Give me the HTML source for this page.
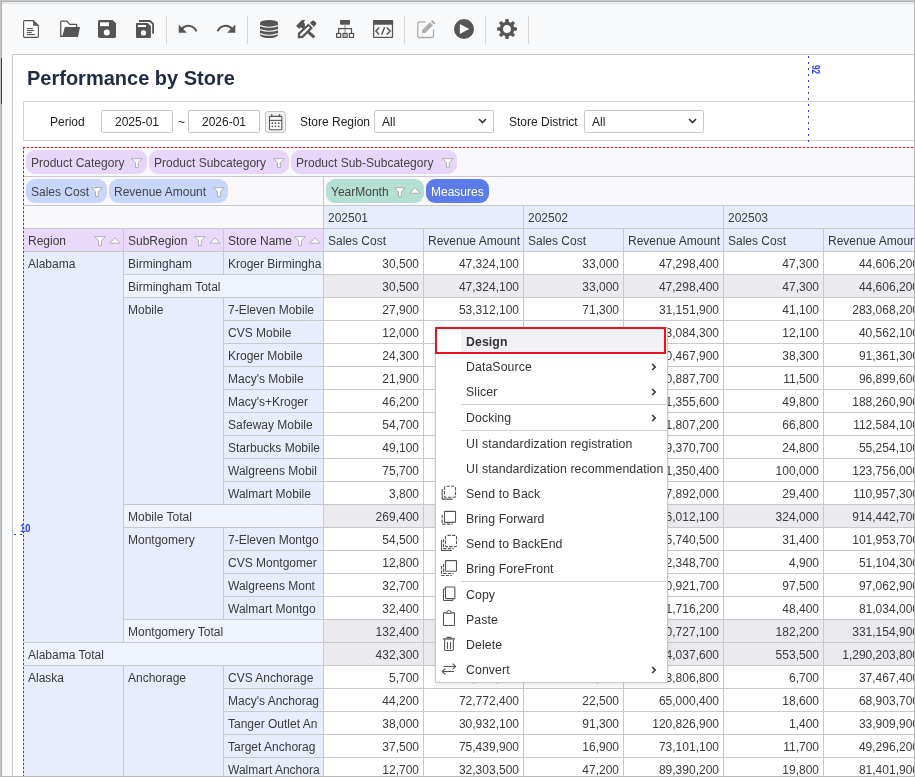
<!DOCTYPE html>
<html><head><meta charset="utf-8">
<style>
*{box-sizing:border-box;margin:0;padding:0}
html,body{width:915px;height:777px;overflow:hidden;background:#f8f9fb;font-family:"Liberation Sans",sans-serif;font-size:12px;color:#333}
.abs{position:absolute}
#frame{position:absolute;left:0;top:0;width:915px;height:777px;border-top:1px solid #c5c5c5;border-left:1px solid #c3c3c3;border-right:1px solid #b8b8b8;border-bottom:1px solid #b8b8b8;pointer-events:none;z-index:50}
#frame2{position:absolute;left:1px;top:1px;width:913px;height:775px;border-top:1px solid #b0b0b0;border-left:1px solid #b2b2b2;pointer-events:none;z-index:50}
.tb{position:absolute;top:16px;width:1px;height:28px;background:#d6d6d6}
.ico{position:absolute}
#panel{position:absolute;left:12px;top:54px;width:910px;height:730px;background:#fff;border:1px solid #c9c9c9}
#title{position:absolute;left:27px;top:64px;font-size:20px;font-weight:bold;color:#1f2b44;white-space:nowrap;line-height:28px}
#filter{position:absolute;left:23px;top:101px;width:900px;height:40px;border:1px solid #d2d2d2;background:#fff}
.lbl{position:absolute;top:114px;font-size:12px;color:#222;line-height:16px;white-space:nowrap}
.inp{position:absolute;top:110px;height:23px;border:1px solid #c8c8c8;border-radius:2px;background:#fff;font-size:12px;color:#222;line-height:23px;white-space:nowrap}
#pivot{position:absolute;left:23px;top:147px;width:900px;height:640px;background:#f8f8fa}
#dtop{position:absolute;left:23px;top:147px;width:892px;height:1px;background:repeating-linear-gradient(90deg,#ff0000 0,#ff0000 2px,#cfcfcf 2px,#cfcfcf 4px);z-index:10}
#dleft{position:absolute;left:23px;top:147px;width:1px;height:630px;background:repeating-linear-gradient(180deg,#ff0000 0,#ff0000 2px,#cfcfcf 2px,#cfcfcf 4px);z-index:10}
.chip{position:absolute;height:24px;border-radius:9px;font-size:12px;color:#444;line-height:26px;white-space:nowrap;padding-left:5px}
.hl{position:absolute;background:#c9c9cc}
.c{position:absolute;overflow:hidden;white-space:nowrap;line-height:22px;padding-left:4px;padding-top:1px;color:#3a3a3a}
.dim{background:#e7edfc}
.tot{background:#eff3fd}
.num{background:#fff;text-align:right;padding-right:4px;padding-left:0}
.tnum{background:#ebeaee}
.hdr{background:#e7edfc}
.phdr{background:#ead9fa}
#menu{position:absolute;left:435px;top:327px;width:233px;height:356px;background:#fff;border:1px solid #c9c9c9;box-shadow:0 2px 5px rgba(0,0,0,0.1);z-index:20}
.mi{position:absolute;left:30px;height:25px;line-height:27px;font-size:12.3px;letter-spacing:0.1px;color:#333;white-space:nowrap}
.sep{position:absolute;left:25px;width:206px;height:1px;background:#d0d0d0}
</style></head><body><div id="root" style="position:absolute;left:0;top:0;width:915px;height:777px;will-change:transform;overflow:hidden">

<div id="frame"></div><div id="frame2"></div>
<!-- toolbar icons -->
<svg class="ico" style="left:23px;top:20px" width="16" height="18" viewBox="0 0 16 18"><path d="M0.6,1.6 Q0.6,0.6 1.6,0.6 H10.4 L15.4,5.6 V16.4 Q15.4,17.4 14.4,17.4 H1.6 Q0.6,17.4 0.6,16.4 Z" fill="#fff" stroke="#555" stroke-width="1.1"/><path d="M10.2,0.6 L15.4,5.8 H10.2 Z" fill="#555"/><rect x="4" y="8" width="5.8" height="1.1" fill="#555"/><rect x="4" y="10" width="6.8" height="1.1" fill="#555"/><rect x="4" y="12" width="4.8" height="1.1" fill="#555"/><rect x="4" y="14" width="7.8" height="1.1" fill="#555"/></svg>
<svg class="ico" style="left:60px;top:20px" width="21" height="18" viewBox="0 0 21 18"><path d="M0.75,16.4 V1.8 Q0.75,1.05 1.5,1.05 H6.9 L9.7,4.4 H16 Q16.7,4.4 16.7,5.1 V7.6 H5.3 L3,16.4 Z" fill="#fff" stroke="#555" stroke-width="1.25" stroke-linejoin="round"/><path d="M5.4,7 H20 L18,17 H0.2 V15.8 H3 Z" fill="#555"/></svg>
<svg class="ico" style="left:98px;top:20px" width="18" height="18" viewBox="0 0 18 18"><path d="M1.5,0 H14.5 L18,3.2 V16.3 Q18,18 16.3,18 H1.7 Q0,18 0,16.3 V1.5 Q0,0 1.5,0 Z" fill="#555"/><rect x="2" y="2.3" width="9" height="3.8" fill="#fff"/><circle cx="8.8" cy="12.6" r="3" fill="#fff"/></svg>
<svg class="ico" style="left:135px;top:19px" width="20" height="20" viewBox="0 0 20 20"><path d="M4,1.1 H15.4 L19,4.5 V14.8 H17.2 V5.3 L14.7,2.9 H4 Z" fill="#555"/><path d="M1.6,3.9 H12.7 L15.9,7 V18 Q15.9,18.9 15,18.9 H1.9 Q1,18.9 1,18 V4.5 Q1,3.9 1.6,3.9 Z" fill="#555"/><rect x="2.9" y="6" width="8.1" height="2" fill="#fff"/><circle cx="8.5" cy="13.9" r="2.6" fill="#fff"/></svg>
<div class="tb" style="left:166px"></div>
<svg class="ico" style="left:178px;top:24px" width="20" height="10" viewBox="0 0 20 10"><path d="M0.7,0.6 V8.8 H8.9 Z" fill="#555"/><path d="M3.8,5.2 A8.4,8.4 0 0 1 18.4,7.4" fill="none" stroke="#555" stroke-width="2"/></svg>
<svg class="ico" style="left:216px;top:24px" width="20" height="10" viewBox="0 0 20 10"><path d="M19.3,0.6 V8.8 H11.1 Z" fill="#555"/><path d="M16.2,5.2 A8.4,8.4 0 0 0 1.6,7.4" fill="none" stroke="#555" stroke-width="2"/></svg>
<div class="tb" style="left:247px"></div>
<svg class="ico" style="left:260px;top:20px" width="18" height="18" viewBox="0 0 18 18"><path d="M0,2.9 A9,2.9 0 0 1 18,2.9 V15.1 A9,2.9 0 0 1 0,15.1 Z" fill="#555"/><path d="M0,5.6 Q9,8.8 18,5.6 M0,9.6 Q9,12.8 18,9.6 M0,13.6 Q9,16.8 18,13.6" fill="none" stroke="#f8f9fb" stroke-width="1.1"/></svg>
<svg class="ico" style="left:293px;top:17px" width="26" height="24" viewBox="0 0 26 24"><path d="M3,9 L8.3,3.6 Q9,3 10,3 L12.2,3 L10.8,5.3 L12,7 L11.7,9.7 L9.7,11.5 L7.7,10.2 L6.5,11.9 Z" fill="#555"/><path d="M10,10 L21.3,20.3" stroke="#555" stroke-width="3"/><path d="M4.8,21.2 L5,16 L15.4,6.5 L19.9,11 L10,21 Z" fill="#555"/><path d="M7,19 L7.2,17 L15.5,9.3 L16.9,10.7 L9,18.8 Z" fill="#fff"/><path d="M16.8,5.8 L19.7,3.6 Q20.6,3.2 21.4,3.9 L23.1,5.6 Q23.6,6.4 23,7.3 L20.9,10 Z" fill="#555"/></svg>
<svg class="ico" style="left:335px;top:20px" width="20" height="18" viewBox="0 0 20 18"><rect x="5" y="0" width="10" height="4.8" rx="0.8" fill="#555"/><rect x="9.3" y="4.8" width="1.5" height="12" fill="#aaa"/><path d="M3.6,13.3 V8.7 H16.5 V13.3" fill="none" stroke="#555" stroke-width="1.2"/><rect x="1.6" y="13.5" width="4.1" height="3.9" fill="#fff" stroke="#555" stroke-width="1.2"/><rect x="8" y="13.5" width="4.1" height="3.9" fill="none" stroke="#555" stroke-width="1.2"/><rect x="14.4" y="13.5" width="4.1" height="3.9" fill="#fff" stroke="#555" stroke-width="1.2"/></svg>
<svg class="ico" style="left:373px;top:20px" width="21" height="18" viewBox="0 0 21 18"><rect x="0.65" y="0.65" width="18.8" height="16.8" rx="0.8" fill="#fff" stroke="#555" stroke-width="1.3"/><rect x="0" y="0" width="20.1" height="4.7" rx="0.8" fill="#555"/><path d="M6.2,7.4 L2.9,11 L6.2,14.6 M13.9,7.4 L17.2,11 L13.9,14.6 M11.6,7.2 L8.7,14.8" fill="none" stroke="#555" stroke-width="1.5"/></svg>
<div class="tb" style="left:404px"></div>
<svg class="ico" style="left:416px;top:19px" width="21" height="20" viewBox="0 0 21 20"><path d="M9.5,2.8 H3.2 Q1.8,2.8 1.8,4.2 V17.1 Q1.8,18.5 3.2,18.5 H16.1 Q17.5,18.5 17.5,17.1 V10.6" fill="none" stroke="#acacac" stroke-width="1.3"/><path d="M16.4,0.9 L19.4,3.9 L17.9,5.4 L14.9,2.4 Z M14,3.3 L17,6.3 L9.2,14.1 L6.2,14.1 L6.2,11.1 Z" fill="#acacac"/></svg>
<svg class="ico" style="left:454px;top:19px" width="20" height="20" viewBox="0 0 20 20"><circle cx="10" cy="10" r="10" fill="#555"/><path d="M5.8,4.9 V14.9 L15.2,9.9 Z" fill="#fff"/></svg>
<div class="tb" style="left:485px"></div>
<svg class="ico" style="left:497px;top:19px" width="20" height="20" viewBox="-10 -10 20 20"><g fill="#555"><circle r="7.3"/><rect x="-1.75" y="-9.9" width="3.5" height="5" rx="0.9" transform="rotate(0)"/><rect x="-1.75" y="-9.9" width="3.5" height="5" rx="0.9" transform="rotate(45)"/><rect x="-1.75" y="-9.9" width="3.5" height="5" rx="0.9" transform="rotate(90)"/><rect x="-1.75" y="-9.9" width="3.5" height="5" rx="0.9" transform="rotate(135)"/><rect x="-1.75" y="-9.9" width="3.5" height="5" rx="0.9" transform="rotate(180)"/><rect x="-1.75" y="-9.9" width="3.5" height="5" rx="0.9" transform="rotate(225)"/><rect x="-1.75" y="-9.9" width="3.5" height="5" rx="0.9" transform="rotate(270)"/><rect x="-1.75" y="-9.9" width="3.5" height="5" rx="0.9" transform="rotate(315)"/></g><circle r="3.9" fill="#fff"/></svg>
<div class="tb" style="left:528px"></div>

<div id="panel"></div>
<div class="abs" style="left:2px;top:2px;width:912px;height:1px;background:#e9eef8"></div>
<div class="abs" style="left:2px;top:3px;width:912px;height:1px;background:#e3e5e1"></div>
<div class="abs" style="left:1px;top:58px;width:1px;height:46px;background:#3c4152;z-index:60"></div>
<div id="title">Performance by Store</div>
<div id="filter"></div>
<div class="lbl" style="left:50px">Period</div>
<div class="inp" style="left:101px;width:72px;text-align:center">2025-01</div>
<div class="lbl" style="left:178px">~</div>
<div class="inp" style="left:188px;width:72px;text-align:center">2026-01</div>
<div class="abs" style="left:265px;top:111px;width:21px;height:22px;border:1px solid #c4c4c4;border-radius:3px;background:#f1f1f2"></div><svg class="ico" style="left:265px;top:111px" width="22" height="22" viewBox="0 0 22 22"><rect x="4.5" y="5.4" width="12.3" height="13.3" rx="0.6" fill="#fafafa" stroke="#555" stroke-width="1.1"/><path d="M4.5,9.4 H16.8" stroke="#555" stroke-width="1.1"/><rect x="6.1" y="3.2" width="1.3" height="3" fill="#555"/><rect x="13.9" y="3.2" width="1.3" height="3" fill="#555"/><circle cx="7.3" cy="12.2" r="0.85" fill="#555"/><circle cx="10.5" cy="12.2" r="0.85" fill="#555"/><circle cx="13.7" cy="12.2" r="0.85" fill="#555"/><circle cx="7.3" cy="15.3" r="0.85" fill="#555"/><circle cx="10.5" cy="15.3" r="0.85" fill="#555"/><circle cx="13.7" cy="15.3" r="0.85" fill="#555"/></svg>
<div class="lbl" style="left:300px">Store Region</div>
<div class="inp" style="left:374px;width:120px;padding-left:7px">All</div>
<svg class="ico" style="left:478px;top:118px" width="9" height="6" viewBox="0 0 9 6"><path d="M1,1 L4.5,4.5 L8,1" fill="none" stroke="#333" stroke-width="1.6"/></svg>
<div class="lbl" style="left:509px">Store District</div>
<div class="inp" style="left:584px;width:120px;padding-left:7px">All</div>
<svg class="ico" style="left:688px;top:118px" width="9" height="6" viewBox="0 0 9 6"><path d="M1,1 L4.5,4.5 L8,1" fill="none" stroke="#333" stroke-width="1.6"/></svg>
<!-- guide line -->
<div class="abs" style="left:808px;top:56px;width:1px;height:88px;background:repeating-linear-gradient(180deg,#2a3cf5 0,#2a3cf5 2px,transparent 2px,transparent 6px)"></div>
<div class="abs" style="left:819.5px;top:65px;font-size:10px;font-weight:bold;letter-spacing:0;color:#3040f5;transform:rotate(90deg) scaleX(0.82);transform-origin:left top;line-height:10px;white-space:nowrap">92</div>
<!-- pivot -->
<div id="pivot"></div><div id="dtop"></div><div id="dleft"></div>
<div class="hl" style="left:24px;top:176px;width:890px;height:1px"></div>
<div class="hl" style="left:323px;top:177px;width:1px;height:28px"></div>
<div class="hl" style="left:24px;top:205px;width:890px;height:572px"></div>

<div class="chip" style="left:26px;top:150px;width:121px;background:#e8d6fa;color:#444">Product Category</div>
<svg class="ico" style="left:131px;top:158px" width="12" height="11" viewBox="0 0 12 11"><path d="M0.6,0.7 H11.2 L7.3,4.7 V9.6 H4.5 V4.7 Z" fill="#fff" stroke="#a8a8a8" stroke-width="0.9" stroke-linejoin="round"/></svg>
<div class="chip" style="left:149px;top:150px;width:140px;background:#e8d6fa;color:#444">Product Subcategory</div>
<svg class="ico" style="left:273px;top:158px" width="12" height="11" viewBox="0 0 12 11"><path d="M0.6,0.7 H11.2 L7.3,4.7 V9.6 H4.5 V4.7 Z" fill="#fff" stroke="#a8a8a8" stroke-width="0.9" stroke-linejoin="round"/></svg>
<div class="chip" style="left:291px;top:150px;width:166px;background:#e8d6fa;color:#444">Product Sub-Subcategory</div>
<svg class="ico" style="left:442px;top:158px" width="12" height="11" viewBox="0 0 12 11"><path d="M0.6,0.7 H11.2 L7.3,4.7 V9.6 H4.5 V4.7 Z" fill="#fff" stroke="#a8a8a8" stroke-width="0.9" stroke-linejoin="round"/></svg>
<div class="chip" style="left:26px;top:179px;width:81px;background:#c9d6fb;color:#444">Sales Cost</div>
<svg class="ico" style="left:91px;top:187px" width="12" height="11" viewBox="0 0 12 11"><path d="M0.6,0.7 H11.2 L7.3,4.7 V9.6 H4.5 V4.7 Z" fill="#fff" stroke="#a8a8a8" stroke-width="0.9" stroke-linejoin="round"/></svg>
<div class="chip" style="left:109px;top:179px;width:119px;background:#c9d6fb;color:#444">Revenue Amount</div>
<svg class="ico" style="left:213px;top:187px" width="12" height="11" viewBox="0 0 12 11"><path d="M0.6,0.7 H11.2 L7.3,4.7 V9.6 H4.5 V4.7 Z" fill="#fff" stroke="#a8a8a8" stroke-width="0.9" stroke-linejoin="round"/></svg>
<div class="chip" style="left:326px;top:179px;width:98px;background:#b3e0d3;color:#444">YearMonth</div>
<svg class="ico" style="left:394px;top:187px" width="12" height="11" viewBox="0 0 12 11"><path d="M0.6,0.7 H11.2 L7.3,4.7 V9.6 H4.5 V4.7 Z" fill="#fff" stroke="#a8a8a8" stroke-width="0.9" stroke-linejoin="round"/></svg>
<svg class="ico" style="left:409px;top:187px" width="12" height="7" viewBox="0 0 12 7"><path d="M0.8,6.2 H11.2 L6,0.8 Z" fill="#fff" stroke="#aaa" stroke-width="0.9" stroke-linejoin="round"/></svg>
<div class="chip" style="left:426px;top:179px;width:63px;background:#5b7bea;color:#fff">Measures</div>
<div class="c " style="left:24px;top:206px;width:299px;height:22px;background:#f9f9fb"></div>
<div class="c hdr" style="left:324px;top:206px;width:199px;height:22px;">202501</div>
<div class="c hdr" style="left:524px;top:206px;width:199px;height:22px;">202502</div>
<div class="c hdr" style="left:724px;top:206px;width:199px;height:22px;">202503</div>
<div class="c phdr" style="left:24px;top:229px;width:99px;height:22px;">Region</div>
<svg class="ico" style="left:94px;top:236px" width="12" height="11" viewBox="0 0 12 11"><path d="M0.6,0.7 H11.2 L7.3,4.7 V9.6 H4.5 V4.7 Z" fill="#fff" stroke="#a8a8a8" stroke-width="0.9" stroke-linejoin="round"/></svg>
<svg class="ico" style="left:108.5px;top:236.5px" width="12" height="7" viewBox="0 0 12 7"><path d="M0.8,6.2 H11.2 L6,0.8 Z" fill="#fff" stroke="#aaa" stroke-width="0.9" stroke-linejoin="round"/></svg>
<div class="c phdr" style="left:124px;top:229px;width:99px;height:22px;">SubRegion</div>
<svg class="ico" style="left:194px;top:236px" width="12" height="11" viewBox="0 0 12 11"><path d="M0.6,0.7 H11.2 L7.3,4.7 V9.6 H4.5 V4.7 Z" fill="#fff" stroke="#a8a8a8" stroke-width="0.9" stroke-linejoin="round"/></svg>
<svg class="ico" style="left:208.5px;top:236.5px" width="12" height="7" viewBox="0 0 12 7"><path d="M0.8,6.2 H11.2 L6,0.8 Z" fill="#fff" stroke="#aaa" stroke-width="0.9" stroke-linejoin="round"/></svg>
<div class="c phdr" style="left:224px;top:229px;width:99px;height:22px;">Store Name</div>
<svg class="ico" style="left:294px;top:236px" width="12" height="11" viewBox="0 0 12 11"><path d="M0.6,0.7 H11.2 L7.3,4.7 V9.6 H4.5 V4.7 Z" fill="#fff" stroke="#a8a8a8" stroke-width="0.9" stroke-linejoin="round"/></svg>
<svg class="ico" style="left:308.5px;top:236.5px" width="12" height="7" viewBox="0 0 12 7"><path d="M0.8,6.2 H11.2 L6,0.8 Z" fill="#fff" stroke="#aaa" stroke-width="0.9" stroke-linejoin="round"/></svg>
<div class="c hdr" style="left:324px;top:229px;width:99px;height:22px;">Sales Cost</div>
<div class="c hdr" style="left:424px;top:229px;width:99px;height:22px;">Revenue Amount</div>
<div class="c hdr" style="left:524px;top:229px;width:99px;height:22px;">Sales Cost</div>
<div class="c hdr" style="left:624px;top:229px;width:99px;height:22px;">Revenue Amount</div>
<div class="c hdr" style="left:724px;top:229px;width:99px;height:22px;">Sales Cost</div>
<div class="c hdr" style="left:824px;top:229px;width:99px;height:22px;">Revenue Amount</div>
<div class="c dim" style="left:24px;top:252px;width:99px;height:390px;">Alabama</div>
<div class="c dim" style="left:24px;top:666px;width:99px;height:229px;">Alaska</div>
<div class="c dim" style="left:124px;top:252px;width:99px;height:22px;">Birmingham</div>
<div class="c dim" style="left:124px;top:298px;width:99px;height:206px;">Mobile</div>
<div class="c dim" style="left:124px;top:528px;width:99px;height:91px;">Montgomery</div>
<div class="c dim" style="left:124px;top:666px;width:99px;height:229px;">Anchorage</div>
<div class="c dim" style="left:224px;top:252px;width:99px;height:22px;">Kroger Birmingha</div>
<div class="c num" style="left:324px;top:252px;width:99px;height:22px;">30,500</div>
<div class="c num" style="left:424px;top:252px;width:99px;height:22px;">47,324,100</div>
<div class="c num" style="left:524px;top:252px;width:99px;height:22px;">33,000</div>
<div class="c num" style="left:624px;top:252px;width:99px;height:22px;">47,298,400</div>
<div class="c num" style="left:724px;top:252px;width:99px;height:22px;">47,300</div>
<div class="c num" style="left:824px;top:252px;width:99px;height:22px;">44,606,200</div>
<div class="c tot" style="left:124px;top:275px;width:199px;height:22px;">Birmingham Total</div>
<div class="c num tnum" style="left:324px;top:275px;width:99px;height:22px;">30,500</div>
<div class="c num tnum" style="left:424px;top:275px;width:99px;height:22px;">47,324,100</div>
<div class="c num tnum" style="left:524px;top:275px;width:99px;height:22px;">33,000</div>
<div class="c num tnum" style="left:624px;top:275px;width:99px;height:22px;">47,298,400</div>
<div class="c num tnum" style="left:724px;top:275px;width:99px;height:22px;">47,300</div>
<div class="c num tnum" style="left:824px;top:275px;width:99px;height:22px;">44,606,200</div>
<div class="c dim" style="left:224px;top:298px;width:99px;height:22px;">7-Eleven Mobile</div>
<div class="c num" style="left:324px;top:298px;width:99px;height:22px;">27,900</div>
<div class="c num" style="left:424px;top:298px;width:99px;height:22px;">53,312,100</div>
<div class="c num" style="left:524px;top:298px;width:99px;height:22px;">71,300</div>
<div class="c num" style="left:624px;top:298px;width:99px;height:22px;">31,151,900</div>
<div class="c num" style="left:724px;top:298px;width:99px;height:22px;">41,100</div>
<div class="c num" style="left:824px;top:298px;width:99px;height:22px;">283,068,200</div>
<div class="c dim" style="left:224px;top:321px;width:99px;height:22px;">CVS Mobile</div>
<div class="c num" style="left:324px;top:321px;width:99px;height:22px;">12,000</div>
<div class="c num" style="left:424px;top:321px;width:99px;height:22px;">63,084,300</div>
<div class="c num" style="left:524px;top:321px;width:99px;height:22px;">12,100</div>
<div class="c num" style="left:624px;top:321px;width:99px;height:22px;">63,084,300</div>
<div class="c num" style="left:724px;top:321px;width:99px;height:22px;">12,100</div>
<div class="c num" style="left:824px;top:321px;width:99px;height:22px;">40,562,100</div>
<div class="c dim" style="left:224px;top:344px;width:99px;height:22px;">Kroger Mobile</div>
<div class="c num" style="left:324px;top:344px;width:99px;height:22px;">24,300</div>
<div class="c num" style="left:424px;top:344px;width:99px;height:22px;">80,467,900</div>
<div class="c num" style="left:524px;top:344px;width:99px;height:22px;">38,300</div>
<div class="c num" style="left:624px;top:344px;width:99px;height:22px;">80,467,900</div>
<div class="c num" style="left:724px;top:344px;width:99px;height:22px;">38,300</div>
<div class="c num" style="left:824px;top:344px;width:99px;height:22px;">91,361,300</div>
<div class="c dim" style="left:224px;top:367px;width:99px;height:22px;">Macy's Mobile</div>
<div class="c num" style="left:324px;top:367px;width:99px;height:22px;">21,900</div>
<div class="c num" style="left:424px;top:367px;width:99px;height:22px;">60,887,700</div>
<div class="c num" style="left:524px;top:367px;width:99px;height:22px;">11,500</div>
<div class="c num" style="left:624px;top:367px;width:99px;height:22px;">60,887,700</div>
<div class="c num" style="left:724px;top:367px;width:99px;height:22px;">11,500</div>
<div class="c num" style="left:824px;top:367px;width:99px;height:22px;">96,899,600</div>
<div class="c dim" style="left:224px;top:390px;width:99px;height:22px;">Macy's+Kroger</div>
<div class="c num" style="left:324px;top:390px;width:99px;height:22px;">46,200</div>
<div class="c num" style="left:424px;top:390px;width:99px;height:22px;">71,355,600</div>
<div class="c num" style="left:524px;top:390px;width:99px;height:22px;">49,800</div>
<div class="c num" style="left:624px;top:390px;width:99px;height:22px;">71,355,600</div>
<div class="c num" style="left:724px;top:390px;width:99px;height:22px;">49,800</div>
<div class="c num" style="left:824px;top:390px;width:99px;height:22px;">188,260,900</div>
<div class="c dim" style="left:224px;top:413px;width:99px;height:22px;">Safeway Mobile</div>
<div class="c num" style="left:324px;top:413px;width:99px;height:22px;">54,700</div>
<div class="c num" style="left:424px;top:413px;width:99px;height:22px;">91,807,200</div>
<div class="c num" style="left:524px;top:413px;width:99px;height:22px;">66,800</div>
<div class="c num" style="left:624px;top:413px;width:99px;height:22px;">91,807,200</div>
<div class="c num" style="left:724px;top:413px;width:99px;height:22px;">66,800</div>
<div class="c num" style="left:824px;top:413px;width:99px;height:22px;">112,584,100</div>
<div class="c dim" style="left:224px;top:436px;width:99px;height:22px;">Starbucks Mobile</div>
<div class="c num" style="left:324px;top:436px;width:99px;height:22px;">49,100</div>
<div class="c num" style="left:424px;top:436px;width:99px;height:22px;">39,370,700</div>
<div class="c num" style="left:524px;top:436px;width:99px;height:22px;">24,800</div>
<div class="c num" style="left:624px;top:436px;width:99px;height:22px;">39,370,700</div>
<div class="c num" style="left:724px;top:436px;width:99px;height:22px;">24,800</div>
<div class="c num" style="left:824px;top:436px;width:99px;height:22px;">55,254,100</div>
<div class="c dim" style="left:224px;top:459px;width:99px;height:22px;">Walgreens Mobil</div>
<div class="c num" style="left:324px;top:459px;width:99px;height:22px;">75,700</div>
<div class="c num" style="left:424px;top:459px;width:99px;height:22px;">81,350,400</div>
<div class="c num" style="left:524px;top:459px;width:99px;height:22px;">100,000</div>
<div class="c num" style="left:624px;top:459px;width:99px;height:22px;">81,350,400</div>
<div class="c num" style="left:724px;top:459px;width:99px;height:22px;">100,000</div>
<div class="c num" style="left:824px;top:459px;width:99px;height:22px;">123,756,000</div>
<div class="c dim" style="left:224px;top:482px;width:99px;height:22px;">Walmart Mobile</div>
<div class="c num" style="left:324px;top:482px;width:99px;height:22px;">3,800</div>
<div class="c num" style="left:424px;top:482px;width:99px;height:22px;">47,892,000</div>
<div class="c num" style="left:524px;top:482px;width:99px;height:22px;">29,400</div>
<div class="c num" style="left:624px;top:482px;width:99px;height:22px;">47,892,000</div>
<div class="c num" style="left:724px;top:482px;width:99px;height:22px;">29,400</div>
<div class="c num" style="left:824px;top:482px;width:99px;height:22px;">110,957,300</div>
<div class="c tot" style="left:124px;top:505px;width:199px;height:22px;">Mobile Total</div>
<div class="c num tnum" style="left:324px;top:505px;width:99px;height:22px;">269,400</div>
<div class="c num tnum" style="left:424px;top:505px;width:99px;height:22px;">456,012,100</div>
<div class="c num tnum" style="left:524px;top:505px;width:99px;height:22px;">324,000</div>
<div class="c num tnum" style="left:624px;top:505px;width:99px;height:22px;">456,012,100</div>
<div class="c num tnum" style="left:724px;top:505px;width:99px;height:22px;">324,000</div>
<div class="c num tnum" style="left:824px;top:505px;width:99px;height:22px;">914,442,700</div>
<div class="c dim" style="left:224px;top:528px;width:99px;height:22px;">7-Eleven Montgo</div>
<div class="c num" style="left:324px;top:528px;width:99px;height:22px;">54,500</div>
<div class="c num" style="left:424px;top:528px;width:99px;height:22px;">65,740,500</div>
<div class="c num" style="left:524px;top:528px;width:99px;height:22px;">31,400</div>
<div class="c num" style="left:624px;top:528px;width:99px;height:22px;">65,740,500</div>
<div class="c num" style="left:724px;top:528px;width:99px;height:22px;">31,400</div>
<div class="c num" style="left:824px;top:528px;width:99px;height:22px;">101,953,700</div>
<div class="c dim" style="left:224px;top:551px;width:99px;height:22px;">CVS Montgomer</div>
<div class="c num" style="left:324px;top:551px;width:99px;height:22px;">12,800</div>
<div class="c num" style="left:424px;top:551px;width:99px;height:22px;">42,348,700</div>
<div class="c num" style="left:524px;top:551px;width:99px;height:22px;">4,900</div>
<div class="c num" style="left:624px;top:551px;width:99px;height:22px;">42,348,700</div>
<div class="c num" style="left:724px;top:551px;width:99px;height:22px;">4,900</div>
<div class="c num" style="left:824px;top:551px;width:99px;height:22px;">51,104,300</div>
<div class="c dim" style="left:224px;top:574px;width:99px;height:22px;">Walgreens Mont</div>
<div class="c num" style="left:324px;top:574px;width:99px;height:22px;">32,700</div>
<div class="c num" style="left:424px;top:574px;width:99px;height:22px;">50,921,700</div>
<div class="c num" style="left:524px;top:574px;width:99px;height:22px;">97,500</div>
<div class="c num" style="left:624px;top:574px;width:99px;height:22px;">50,921,700</div>
<div class="c num" style="left:724px;top:574px;width:99px;height:22px;">97,500</div>
<div class="c num" style="left:824px;top:574px;width:99px;height:22px;">97,062,900</div>
<div class="c dim" style="left:224px;top:597px;width:99px;height:22px;">Walmart Montgo</div>
<div class="c num" style="left:324px;top:597px;width:99px;height:22px;">32,400</div>
<div class="c num" style="left:424px;top:597px;width:99px;height:22px;">31,716,200</div>
<div class="c num" style="left:524px;top:597px;width:99px;height:22px;">48,400</div>
<div class="c num" style="left:624px;top:597px;width:99px;height:22px;">31,716,200</div>
<div class="c num" style="left:724px;top:597px;width:99px;height:22px;">48,400</div>
<div class="c num" style="left:824px;top:597px;width:99px;height:22px;">81,034,000</div>
<div class="c tot" style="left:124px;top:620px;width:199px;height:22px;">Montgomery Total</div>
<div class="c num tnum" style="left:324px;top:620px;width:99px;height:22px;">132,400</div>
<div class="c num tnum" style="left:424px;top:620px;width:99px;height:22px;">180,727,100</div>
<div class="c num tnum" style="left:524px;top:620px;width:99px;height:22px;">182,200</div>
<div class="c num tnum" style="left:624px;top:620px;width:99px;height:22px;">180,727,100</div>
<div class="c num tnum" style="left:724px;top:620px;width:99px;height:22px;">182,200</div>
<div class="c num tnum" style="left:824px;top:620px;width:99px;height:22px;">331,154,900</div>
<div class="c tot" style="left:24px;top:643px;width:299px;height:22px;">Alabama Total</div>
<div class="c num tnum" style="left:324px;top:643px;width:99px;height:22px;">432,300</div>
<div class="c num tnum" style="left:424px;top:643px;width:99px;height:22px;">684,037,600</div>
<div class="c num tnum" style="left:524px;top:643px;width:99px;height:22px;">553,500</div>
<div class="c num tnum" style="left:624px;top:643px;width:99px;height:22px;">684,037,600</div>
<div class="c num tnum" style="left:724px;top:643px;width:99px;height:22px;">553,500</div>
<div class="c num tnum" style="left:824px;top:643px;width:99px;height:22px;">1,290,203,800</div>
<div class="c dim" style="left:224px;top:666px;width:99px;height:22px;">CVS Anchorage</div>
<div class="c num" style="left:324px;top:666px;width:99px;height:22px;">5,700</div>
<div class="c num" style="left:424px;top:666px;width:99px;height:22px;">33,806,800</div>
<div class="c num" style="left:524px;top:666px;width:99px;height:22px;">6,700</div>
<div class="c num" style="left:624px;top:666px;width:99px;height:22px;">33,806,800</div>
<div class="c num" style="left:724px;top:666px;width:99px;height:22px;">6,700</div>
<div class="c num" style="left:824px;top:666px;width:99px;height:22px;">37,467,400</div>
<div class="c dim" style="left:224px;top:689px;width:99px;height:22px;">Macy's Anchorag</div>
<div class="c num" style="left:324px;top:689px;width:99px;height:22px;">44,200</div>
<div class="c num" style="left:424px;top:689px;width:99px;height:22px;">72,772,400</div>
<div class="c num" style="left:524px;top:689px;width:99px;height:22px;">22,500</div>
<div class="c num" style="left:624px;top:689px;width:99px;height:22px;">65,000,400</div>
<div class="c num" style="left:724px;top:689px;width:99px;height:22px;">18,600</div>
<div class="c num" style="left:824px;top:689px;width:99px;height:22px;">68,903,700</div>
<div class="c dim" style="left:224px;top:712px;width:99px;height:22px;">Tanger Outlet An</div>
<div class="c num" style="left:324px;top:712px;width:99px;height:22px;">38,000</div>
<div class="c num" style="left:424px;top:712px;width:99px;height:22px;">30,932,100</div>
<div class="c num" style="left:524px;top:712px;width:99px;height:22px;">91,300</div>
<div class="c num" style="left:624px;top:712px;width:99px;height:22px;">120,826,900</div>
<div class="c num" style="left:724px;top:712px;width:99px;height:22px;">1,400</div>
<div class="c num" style="left:824px;top:712px;width:99px;height:22px;">33,909,900</div>
<div class="c dim" style="left:224px;top:735px;width:99px;height:22px;">Target Anchorag</div>
<div class="c num" style="left:324px;top:735px;width:99px;height:22px;">37,500</div>
<div class="c num" style="left:424px;top:735px;width:99px;height:22px;">75,439,900</div>
<div class="c num" style="left:524px;top:735px;width:99px;height:22px;">16,900</div>
<div class="c num" style="left:624px;top:735px;width:99px;height:22px;">73,101,100</div>
<div class="c num" style="left:724px;top:735px;width:99px;height:22px;">11,700</div>
<div class="c num" style="left:824px;top:735px;width:99px;height:22px;">49,296,200</div>
<div class="c dim" style="left:224px;top:758px;width:99px;height:22px;">Walmart Anchora</div>
<div class="c num" style="left:324px;top:758px;width:99px;height:22px;">12,700</div>
<div class="c num" style="left:424px;top:758px;width:99px;height:22px;">32,303,500</div>
<div class="c num" style="left:524px;top:758px;width:99px;height:22px;">47,200</div>
<div class="c num" style="left:624px;top:758px;width:99px;height:22px;">89,390,200</div>
<div class="c num" style="left:724px;top:758px;width:99px;height:22px;">19,800</div>
<div class="c num" style="left:824px;top:758px;width:99px;height:22px;">81,401,900</div>
<div id="menu"></div>
<div class="abs" style="left:435px;top:327px;width:231px;height:27px;border:2px solid #e8141c;z-index:22"></div>
<div class="abs" style="left:461px;top:329px;width:203px;height:23px;background:#f0f0f5;z-index:21"></div>
<div class="mi" style="left:466px;top:329px;font-weight:bold;z-index:23">Design</div>
<div class="mi" style="left:466px;top:354px;z-index:23">DataSource</div>
<svg class="ico" style="left:650px;top:363px;z-index:23" width="8" height="8" viewBox="0 0 8 8"><path d="M2.2,1 L5.2,4 L2.2,7" fill="none" stroke="#333" stroke-width="1.6"/></svg>
<div class="mi" style="left:466px;top:379px;z-index:23">Slicer</div>
<svg class="ico" style="left:650px;top:388px;z-index:23" width="8" height="8" viewBox="0 0 8 8"><path d="M2.2,1 L5.2,4 L2.2,7" fill="none" stroke="#333" stroke-width="1.6"/></svg>
<div class="abs" style="left:461px;top:404px;width:206px;height:1px;background:#d2d2d2;z-index:21"></div>
<div class="mi" style="left:466px;top:405px;z-index:23">Docking</div>
<svg class="ico" style="left:650px;top:414px;z-index:23" width="8" height="8" viewBox="0 0 8 8"><path d="M2.2,1 L5.2,4 L2.2,7" fill="none" stroke="#333" stroke-width="1.6"/></svg>
<div class="abs" style="left:461px;top:430px;width:206px;height:1px;background:#d2d2d2;z-index:21"></div>
<div class="mi" style="left:466px;top:431px;z-index:23">UI standardization registration</div>
<div class="mi" style="left:466px;top:456px;z-index:23">UI standardization recommendation</div>
<div class="mi" style="left:466px;top:481px;z-index:23">Send to Back</div>
<div class="mi" style="left:466px;top:506px;z-index:23">Bring Forward</div>
<div class="mi" style="left:466px;top:531px;z-index:23">Send to BackEnd</div>
<div class="mi" style="left:466px;top:556px;z-index:23">Bring ForeFront</div>
<div class="abs" style="left:461px;top:581px;width:206px;height:1px;background:#d2d2d2;z-index:21"></div>
<div class="mi" style="left:466px;top:582px;z-index:23">Copy</div>
<div class="mi" style="left:466px;top:607px;z-index:23">Paste</div>
<div class="mi" style="left:466px;top:632px;z-index:23">Delete</div>
<div class="mi" style="left:466px;top:657px;z-index:23">Convert</div>
<svg class="ico" style="left:650px;top:666px;z-index:23" width="8" height="8" viewBox="0 0 8 8"><path d="M2.2,1 L5.2,4 L2.2,7" fill="none" stroke="#333" stroke-width="1.6"/></svg>
<svg class="ico" style="left:440px;top:483px;z-index:23" width="18" height="18" viewBox="0 0 18 18"><rect x="4.5" y="3.3" width="11" height="11" rx="1" stroke="#555" stroke-width="1.1" fill="none" stroke-dasharray="3.3 1.3" stroke-dashoffset="-1"/><path d="M2.2,6 V16.1 H12.7" stroke="#555" stroke-width="1.1" fill="none"/></svg>
<svg class="ico" style="left:440px;top:508px;z-index:23" width="18" height="18" viewBox="0 0 18 18"><rect x="4.5" y="3.4" width="11" height="11" rx="0.6" stroke="#555" stroke-width="1.1" fill="none" stroke-width="1.2"/><path d="M2.2,6 V16.1 H12.7" stroke="#555" stroke-width="1.1" fill="none" stroke-dasharray="3.3 1.3" stroke-dashoffset="-1"/></svg>
<svg class="ico" style="left:440px;top:533px;z-index:23" width="18" height="18" viewBox="0 0 18 18"><rect x="5.5" y="2.4" width="11" height="11.2" rx="1" stroke="#555" stroke-width="1.1" fill="none" stroke-dasharray="3.3 1.3" stroke-dashoffset="-1"/><path d="M3.5,5.1 V15.6 H13.7" stroke="#555" stroke-width="1.1" fill="none" stroke-dasharray="3.3 1.3" stroke-dashoffset="-1"/><path d="M1.5,7.1 V17.6 H11.9" stroke="#555" stroke-width="1.1" fill="none"/></svg>
<svg class="ico" style="left:440px;top:558px;z-index:23" width="18" height="18" viewBox="0 0 18 18"><rect x="5.5" y="2.6" width="11" height="10.6" rx="0.6" stroke="#555" stroke-width="1.1" fill="none" stroke-width="1.2"/><path d="M3.5,5 V15.5 H13.7" stroke="#555" stroke-width="1.1" fill="none" stroke-dasharray="3.3 1.3" stroke-dashoffset="-1"/><path d="M1.5,7 V17.5 H11.9" stroke="#555" stroke-width="1.1" fill="none" stroke-dasharray="3.3 1.3" stroke-dashoffset="-1"/></svg>
<svg class="ico" style="left:440px;top:584px;z-index:23" width="18" height="18" viewBox="0 0 18 18"><rect x="3.5" y="5" width="9.4" height="11.5" rx="0.8" fill="#fff" stroke="#555" stroke-width="1.1" fill="none"/><rect x="5.5" y="3" width="9.4" height="11.6" rx="0.8" fill="#fff" stroke="#555" stroke-width="1.1"/></svg>
<svg class="ico" style="left:440px;top:609px;z-index:23" width="18" height="18" viewBox="0 0 18 18"><rect x="3.5" y="3.9" width="11" height="12.6" rx="0.6" stroke="#555" stroke-width="1.1" fill="none"/><path d="M7,4.4 V2.4 Q9,0.6 11,2.4 V4.4 Z" fill="#fff" stroke="#555" stroke-width="1"/></svg>
<svg class="ico" style="left:440px;top:634px;z-index:23" width="18" height="18" viewBox="0 0 18 18"><rect x="3" y="4.2" width="12" height="1.4" fill="#555"/><rect x="6.6" y="2.8" width="4.8" height="1.2" fill="#555"/><path d="M4.6,5.6 V15.6 Q4.6,16.5 5.5,16.5 H12.5 Q13.4,16.5 13.4,15.6 V5.6" stroke="#555" stroke-width="1.1" fill="none"/><path d="M7.5,8 V15 M10.5,8 V15" stroke="#555" stroke-width="1.1" fill="none"/></svg>
<svg class="ico" style="left:440px;top:659px;z-index:23" width="18" height="18" viewBox="0 0 18 18"><path d="M3.5,7.5 H15.6 M12.6,4.6 L15.6,7.5 L12.6,10.4" stroke="#555" stroke-width="1.1" fill="none" stroke-width="1.2"/><path d="M14,12.5 H2.2 M5.3,9.4 L2.2,12.5 L5.3,15.6" stroke="#555" stroke-width="1.1" fill="none" stroke-width="1.2"/></svg>
<div class="abs" style="left:14px;top:534px;width:9px;height:1px;background:repeating-linear-gradient(90deg,#2a3cf5 0,#2a3cf5 2px,transparent 2px,transparent 6px)"></div><div class="abs" style="left:20px;top:524px;font-size:10px;font-weight:bold;letter-spacing:-0.6px;color:#3040f5;line-height:10px;z-index:5">10</div>
</div></body></html>
